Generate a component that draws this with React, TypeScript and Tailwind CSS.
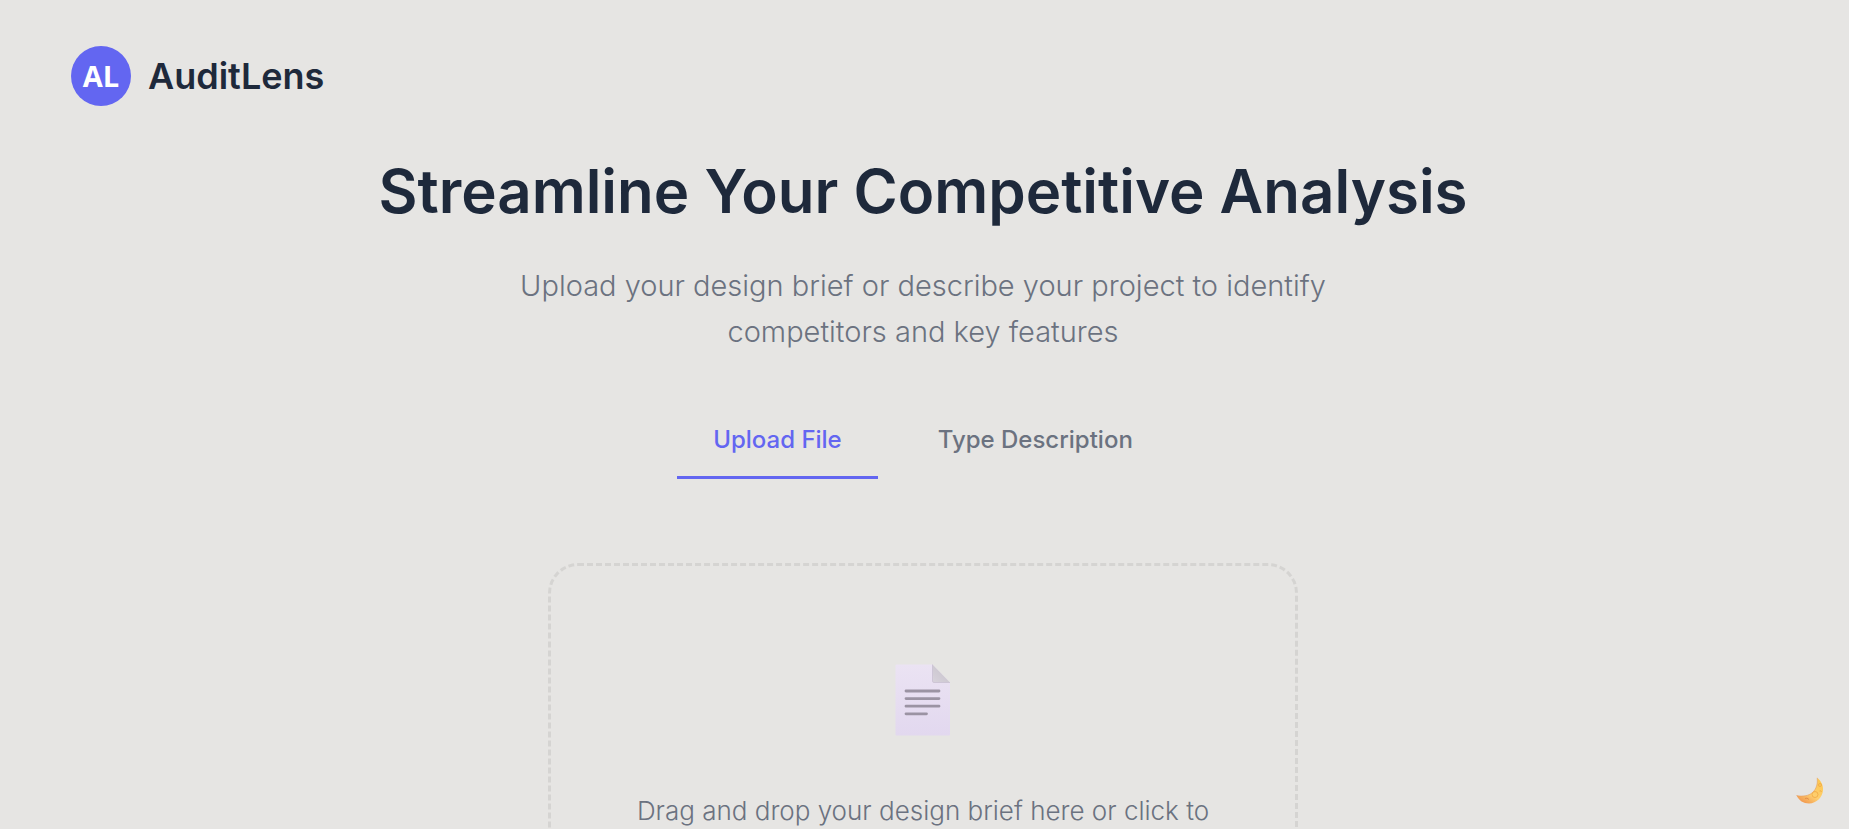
import { useState } from 'react';

const TABS = [
  { id: 'upload', label: 'Upload File' },
  { id: 'describe', label: 'Type Description' },
];

function FileIcon() {
  return (
    <svg width="56" height="72" viewBox="0 0 56 72" aria-hidden="true">
      <defs>
        <linearGradient id="sheet" x1="0" y1="0" x2="0" y2="1">
          <stop offset="0" stopColor="#ebe3f3" />
          <stop offset="1" stopColor="#e2d8ef" />
        </linearGradient>
        <linearGradient id="fold" x1="0" y1="1" x2="1" y2="0">
          <stop offset="0" stopColor="#d8d3dc" />
          <stop offset="1" stopColor="#c4bfc8" />
        </linearGradient>
      </defs>
      <path d="M1.5 0.5H37.5L55 18.5V70.5Q55 71.5 54 71.5H1.5Q0.5 71.5 0.5 70.5V1.5Q0.5 0.5 1.5 0.5Z" fill="url(#sheet)" />
      <path d="M37.5 0.5L55 18.5H39Q37.5 18.5 37.5 17Z" fill="url(#fold)" />
      <path d="M37.5 0.5V17Q37.5 18.5 39 18.5H55" fill="none" stroke="#c9c0d2" strokeWidth="0.8" />
      <path d="M11 27H44M11 34.6H44M11 42.2H44M11 49.8H31.5" stroke="#9b93a3" strokeWidth="2.8" strokeLinecap="round" />
    </svg>
  );
}

function MoonIcon() {
  return (
    <svg width="28" height="28" viewBox="0 0 28 28" aria-hidden="true">
      <defs>
        <linearGradient id="moon" x1="0.9" y1="0.1" x2="0.3" y2="1">
          <stop offset="0" stopColor="#fdc750" />
          <stop offset="0.6" stopColor="#fecf70" />
          <stop offset="1" stopColor="#f29a50" />
        </linearGradient>
      </defs>
      <path d="M21.2 0.8C25 4 27.3 8 27 13C26.5 20.5 20.5 26.3 13 26.5C7.5 26.5 3 23.5 0.5 18.5C6.5 19.8 12.5 19 16.5 15.5C20.5 12 21.8 6.500 21.2 0.8Z" fill="url(#moon)" />
      <path d="M21.2 0.8C21.8 6.5 20.5 12 16.5 15.5C12.5 19 6.5 19.8 0.5 18.5" fill="none" stroke="#e0a068" strokeWidth="0.6" />
      <g fill="none" stroke="#f0ac48" strokeWidth="0.9">
        <circle cx="19" cy="17.5" r="3" />
        <circle cx="24" cy="8" r="1.5" />
        <path d="M9 21.5Q11 20.2 13 22.5" stroke="#e08a48" />
        <path d="M23.5 14Q25 13 25.5 15" />
      </g>
    </svg>
  );
}

export default function App() {
  const [tab, setTab] = useState('upload');

  return (
    <div className="relative h-screen overflow-hidden bg-[#e6e5e3] pr-[3px] font-['Inter','Open_Sans',sans-serif] text-[#1e293b]">
      <header className="flex items-center gap-[17px] px-[71px] pt-[45px]">
        <div className="flex size-[60px] items-center justify-center rounded-full bg-[#6366f1] font-['Open_Sans',sans-serif] text-[29px] leading-[62px] font-bold text-white">
          AL
        </div>
        <span className="text-[36px] leading-[62px] font-semibold">AuditLens</span>
      </header>

      <main className="flex flex-col items-center text-center">
        <h1 className="mt-[46px] text-[60px] leading-[76px] font-semibold">Streamline Your Competitive Analysis</h1>
        <p className="mt-[34px] max-w-[850px] text-[29px] leading-[46px] font-light text-[#6b7280]">
          Upload your design brief or describe your project to identify competitors and key features
        </p>

        <div role="tablist" className="mt-[45px] flex gap-6">
          {TABS.map((t) => (
            <button
              key={t.id}
              role="tab"
              aria-selected={tab === t.id}
              onClick={() => setTab(t.id)}
              className={`border-b-[3px] px-9 pt-6 pb-5 text-[24px] leading-[32px] font-medium ${
                tab === t.id ? 'border-[#6366f1] text-[#6366f1]' : 'border-transparent text-[#6b7280]'
              }`}
            >
              {t.label}
            </button>
          ))}
        </div>

        <button className="mt-[84px] flex h-[450px] w-full max-w-[750px] shrink-0 flex-col items-center rounded-[30px] border-[3px] border-dashed border-[#d5d4d2] pt-[98px]">
          <FileIcon />
          <span className="mt-[53px] text-[26px] leading-[43px] font-light text-[#6b7280]">
            Drag and drop your design brief here or click to
          </span>
        </button>
      </main>

      <button aria-label="Toggle dark mode" className="absolute right-[25px] bottom-6">
        <MoonIcon />
      </button>
    </div>
  );
}
